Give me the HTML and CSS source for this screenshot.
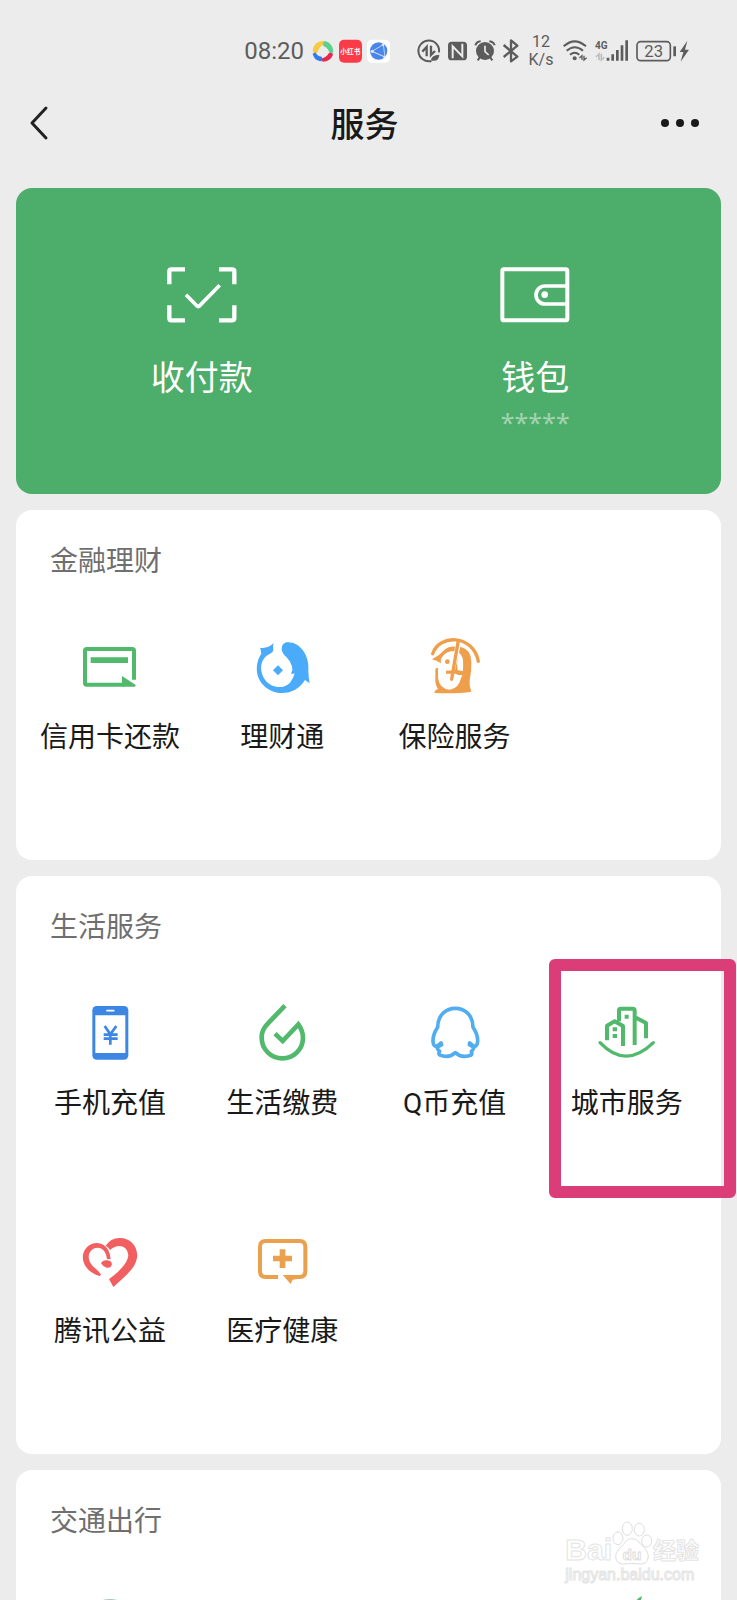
FILE: index.html
```html
<!DOCTYPE html>
<html lang="zh-CN">
<head>
<meta charset="utf-8">
<meta name="viewport" content="width=device-width, initial-scale=1">
<title>服务</title>
<link rel="stylesheet" href="styles.css">
</head>
<body>
<div class="app">
  <div class="status">
    <span class="clock">08:20</span>
    <div class="status-apps">
      <svg width="22" height="24" viewBox="245 40 66 72">
        <path d="M247 75Q250 47 279 45L285 55Q266 60 262 80Q252 88 247 75Z" fill="#f7c945"/><path d="M284 46Q309 53 309 80L298 86Q296 68 280 62Q275 49 284 46Z" fill="#5bd28c"/><path d="M308 87Q300 107 277 108L272 99Q290 95 295 83Q306 78 308 87Z" fill="#e8274f"/><path d="M270 107Q250 102 247 84L256 80Q259 92 274 93Q279 105 270 107Z" fill="#2f7bf0"/>
      </svg>
      <svg width="23" height="24" viewBox="327 40 69 72">
        <rect x="327" y="42" width="69" height="69" rx="15" fill="#fb3b47"/>
        <text x="361" y="84" class="app-mark">小红书</text>
      </svg>
      <svg width="23" height="24" viewBox="411 40 69 72">
        <rect x="411" y="42" width="69" height="69" rx="15" fill="#fff"/>
        <circle cx="446" cy="76" r="26" fill="#4a86e8"/>
        <path d="M426 77L460 57L465 94Z M426 77L465 94" fill="none" stroke="#b9d2fb" stroke-width="3"/>
        <circle cx="427" cy="77" r="5" fill="#dce9ff"/><circle cx="459" cy="57" r="4" fill="#dce9ff"/><circle cx="464" cy="94" r="4" fill="#dce9ff"/>
      </svg>
    </div>
    <div class="status-icons">
      <svg width="22" height="24" viewBox="567 40 66 72" fill="none" stroke="#5c5c5c" stroke-width="6">
        <path d="M630 80A31 31 0 1 0 606 106"/><path d="M580 78L593 64V92M606 60V88L618 76" stroke-width="7"/><path d="M606 104Q606 89 631 87Q630 110 606 104Z" fill="#5c5c5c" stroke="none"/><path d="M604 109L618 97" stroke-width="3"/>
      </svg>
      <svg width="19" height="24" viewBox="655 40 57 72">
        <rect x="655" y="48" width="57" height="56" rx="11" fill="#5c5c5c"/><path d="M669 98V62L698 92V54" fill="none" stroke="#ececec" stroke-width="6"/>
      </svg>
      <svg width="20" height="24" viewBox="45 40 60 72" fill="none" stroke="#5c5c5c">
        <circle cx="75" cy="76" r="27" fill="#5c5c5c" stroke="none"/><path d="M46 59Q50 48 62 47M88 47Q101 49 104 59M59 96L53 104M91 96L97 104" stroke-width="6"/><path d="M75 60V78L86 88" stroke="#ececec" stroke-width="5"/>
      </svg>
      <svg width="16" height="24" viewBox="130 40 48 72" fill="none" stroke="#5c5c5c" stroke-width="7" stroke-linejoin="round">
        <path d="M132 58L173 93L154 107V44L173 60L132 94"/>
      </svg>
      <span class="speed">12<br>K/s</span>
      <svg width="24" height="24" viewBox="317 40 72 72" fill="none" stroke="#5c5c5c" stroke-width="6">
        <path d="M319 62Q352 32 386 62M328 75Q352 54 377 75M338 87Q352 76 366 87"/><circle cx="352" cy="98" r="6" fill="#5c5c5c" stroke="none"/><path d="M366 97L374 90V103M380 90V103L388 96" stroke-width="4"/>
      </svg>
      <svg width="33" height="24" viewBox="406 40 99 72" fill="#5c5c5c">
        <text x="406" y="71" class="net-mark">4G</text>
        <path d="M441 96h8v9h-8zM455 86h8v19h-8zM469 73h8v32h-8zM483 59h8v46h-8zM497 44h8v61h-8z"/>
        <path d="M409 94L418 85V104M425 84V103L434 95" fill="none" stroke="#bdbdbd" stroke-width="5"/>
      </svg>
      <svg width="54" height="24" viewBox="528 40 162 72" fill="#5c5c5c">
        <rect x="531" y="48" width="100" height="57" rx="11" fill="none" stroke="#5c5c5c" stroke-width="5"/>
        <text x="581" y="95" class="battery-mark">23</text>
        <rect x="640" y="62" width="8" height="30" rx="2"/><path d="M682 45L659 79H670L662 108L687 72H675Z"/>
      </svg>
    </div>
  </div>

  <header class="header">
    <button class="icon-button" aria-label="返回">
      <svg width="20" height="36" viewBox="0 0 20 36" fill="none" stroke="#222" stroke-width="3" stroke-linejoin="round" stroke-linecap="round"><path d="M18 3L4 18L18 33"/></svg>
    </button>
    <h1 class="title">服务</h1>
    <button class="icon-button" aria-label="更多">
      <svg width="38" height="10" viewBox="0 0 38 10" fill="#191919"><circle cx="4" cy="5" r="4"/><circle cx="19" cy="5" r="4"/><circle cx="34" cy="5" r="4"/></svg>
    </button>
  </header>

  <main class="cards">
    <section class="pay">
      <a class="pay-item" href="#pay">
        <svg width="72" height="58" viewBox="108 77 216 174" fill="none" stroke="#fff" stroke-width="13">
          <path d="M165 87H124Q118 87 118 93V132M267 87H306Q313 87 313 93V132M118 195V234Q118 240 124 240H165M267 240H306Q313 240 313 234V195"/><path d="M168 163L201 197Q204 200 208 197L269 135" stroke-width="11"/>
        </svg>
        <span class="pay-label">收付款</span>
      </a>
      <a class="pay-item" href="#wallet">
        <svg width="72" height="58" viewBox="1108 77 216 174" fill="none" stroke="#fff" stroke-width="12">
          <rect x="1118" y="87" width="195" height="153" rx="5"/><path d="M1313 137H1246A27 27 0 0 0 1246 191H1313" stroke-width="11"/><circle cx="1245" cy="163" r="10" fill="#fff" stroke="none"/>
        </svg>
        <span class="pay-label">钱包</span>
        <span class="balance">*****</span>
      </a>
    </section>

    <section class="card">
      <h2 class="card-title">金融理财</h2>
      <div class="grid">
        <a class="item" href="#credit">
          <svg class="icon" viewBox="66 57 168 168"><path d="M222 179V92Q222 87 217 87H80Q75 87 75 92V189Q75 194 80 194H190" fill="none" stroke="#51b96c" stroke-width="12"/><path d="M92 112H204V129H92ZM186 168L226 194Q229 200 222 200H186Z" fill="#51b96c"/></svg>
          <span>信用卡还款</span>
        </a>
        <a class="item" href="#wealth">
          <svg class="icon" viewBox="583 57 168 168" fill="#4aabfa"><path d="M642 69Q638 78 641 91Q640 98 631 101C607 112 600 135 607 161C615 188 640 204 669 201Q696 195 705 160L696 163L695 159Q700 151 697 139Q692 122 680 111Q667 101 666 87Q666 71 680 67C717 62 751 103 746 153Q746 169 750 190L736 180C718 209 689 223 653 218C612 209 587 175 592 137Q594 116 605 101Q604 90 601 83Q624 87 642 69Z"/><path d="M655 136L670 151L655 166L640 151Z"/></svg>
          <span>理财通</span>
        </a>
        <a class="item" href="#insurance">
          <svg class="icon" viewBox="140 57 168 168" fill="#ef9e4b"><path d="M157 101C176 42 278 42 294 124" fill="none" stroke="#ef9e4b" stroke-width="10" stroke-linecap="round"/><path d="M234 62L222 130L214 178" fill="none" stroke="#ef9e4b" stroke-width="10" stroke-linecap="round"/><path d="M155 118Q177 107 195 87Q208 77 224 80L222 94Q203 91 190 106Q179 116 182 130Q169 121 155 118Z"/><path d="M240 80Q272 88 273 124Q274 154 268 180Q266 197 273 215Q230 222 162 219Q162 211 173 206Q164 195 165 177V149Q165 143 173 143V173Q177 207 209 209Q236 205 243 171L247 166Q232 166 225 161H197V152L224 151L232 114Q229 135 232 151L248 153Q249 136 248 121Q247 107 236 98Z"/><circle cx="201" cy="125" r="7"/></svg>
          <span>保险服务</span>
        </a>
      </div>
    </section>

    <section class="card">
      <h2 class="card-title">生活服务</h2>
      <div class="grid">
        <a class="item" href="#mobile">
          <svg class="icon" viewBox="66 60 168 168"><rect x="97" y="63" width="108" height="161" rx="13" fill="#3d87e4"/><path d="M106 91H196V204H106Z" fill="#fff"/><path d="M141 77H161" stroke="#fff" stroke-width="5" stroke-linecap="round"/><path d="M134 123L151 148L169 123M151 148V179M131 149H173M131 161H173" fill="none" stroke="#3d87e4" stroke-width="8"/></svg>
          <span>手机充值</span>
        </a>
        <a class="item" href="#bills">
          <svg class="icon" viewBox="583 60 168 168" fill="none" stroke="#51b96c" stroke-width="14"><path d="M676 62L625 115Q605 135 606 158A62 62 0 0 0 730 158Q730 138 716 118L669 168L646 146"/></svg>
          <span>生活缴费</span>
        </a>
        <a class="item" href="#qcoin">
          <svg class="icon" viewBox="80 60 168 168" fill="none" stroke="#51adf0" stroke-width="11" stroke-linejoin="round" stroke-linecap="round"><path d="M122 174L113 181Q99 189 98 169Q97 149 112 127C112 92 135 70 165 70C195 70 218 92 218 127Q233 149 232 169Q230 190 217 181L208 174M124 179L110 187Q113 196 118 199Q111 211 125 212Q148 219 165 203Q182 219 206 212Q218 211 213 200Q219 194 221 187L207 179"/></svg>
          <span>Q币充值</span>
        </a>
        <a class="item" href="#city">
          <svg class="icon" viewBox="597 60 168 168" fill="none" stroke="#51b96c" stroke-width="12" stroke-linejoin="round"><path d="M657 109V76Q657 71 662 71H698Q704 71 704 77V180M621 166V122L644 109L669 123V183M704 96L738 114V160"/><path d="M600 173Q677 254 760 173" stroke-width="10" stroke-linecap="round"/><path d="M674 89H686V101H674ZM638 127H651V139H638ZM638 147H651V159H638Z" fill="#51b96c" stroke="none"/></svg>
          <span>城市服务</span>
          <i class="highlight"></i>
        </a>
        <a class="item" href="#charity">
          <svg class="icon" viewBox="66 39 168 168" fill="#f15f60"><path d="M119 168C84 158 65 132 69 104C76 73 108 60 131 75Q149 85 152 118L141 117Q138 91 120 84Q98 81 88 100Q81 121 100 140Q115 151 123 164Z"/><path d="M137 77Q151 55 179 54C215 54 235 83 231 113C226 147 188 175 160 201L147 177C173 158 202 134 205 106Q203 80 179 78Q163 78 150 90Q145 81 137 77ZM123 130Q128 119 143 121Q158 124 155 136Q150 147 137 142Q129 139 123 130Z"/></svg>
          <span>腾讯公益</span>
        </a>
        <a class="item" href="#health">
          <svg class="icon" viewBox="583 39 168 168"><path d="M655 171H618Q601 171 601 154V80Q601 63 618 63H720Q737 63 737 80V154Q737 171 720 171H696" fill="none" stroke="#eaa04c" stroke-width="12"/><path d="M660 88H677V107H697V124H677V144H660V124H640V107H660ZM669 165H713V177L699 179L693 192Z" fill="#eaa04c"/></svg>
          <span>医疗健康</span>
        </a>
      </div>
    </section>

    <section class="card card-last">
      <h2 class="card-title">交通出行</h2>
      <div class="grid">
        <a class="item" href="#travel" aria-label="出行"><svg class="icon" viewBox="0 0 56 56"><circle cx="28" cy="28" r="28" fill="#a9c8bf"/></svg></a>
        <span class="item"></span>
        <span class="item"></span>
        <a class="item" href="#rail" aria-label="车票"><svg class="icon" viewBox="0 0 56 56"><path d="M16 4Q18 -1 23 -3L21 4Z" transform="translate(20)" fill="#51b96c"/></svg></a>
      </div>
    </section>
  </main>

  <div class="watermark">
    <div class="watermark-row">
      <span class="wm-latin">Bai</span>
      <svg width="41" height="44" viewBox="208 58 123 132" fill="#fff" stroke="#dedede" stroke-width="3">
        <ellipse cx="226" cy="110" rx="15" ry="19"/><ellipse cx="254" cy="81" rx="15" ry="20"/><ellipse cx="290" cy="84" rx="15" ry="19"/><ellipse cx="312" cy="118" rx="15" ry="18"/><path d="M267 111Q284 111 294 128Q317 146 317 166Q314 190 286 187Q267 183 249 187Q220 190 219 165Q220 147 242 129Q251 112 267 111Z"/>
        <text x="268" y="174" class="wm-du">du</text>
      </svg>
      <span class="wm-cjk">经验</span>
    </div>
    <span class="wm-url">jingyan.baidu.com</span>
  </div>
</div>
</body>
</html>
```
FILE: styles.css
```css
* { box-sizing: border-box; }
body {
  margin: 0;
  background: #ececec;
  color: #191919;
  font-family: Roboto, "Noto Sans CJK SC", sans-serif;
}
svg { display: block; flex: none; overflow: visible; }
a { color: inherit; text-decoration: none; }

.app {
  position: relative;
  display: flex;
  flex-direction: column;
  height: 100vh;
  overflow: hidden;
}

.status {
  flex: none;
  display: flex;
  align-items: center;
  justify-content: flex-end;
  height: 76px;
  padding: 25px 47px 0 0;
  color: #5c5c5c;
}
.clock { margin-right: 8px; font-size: 24px; line-height: 28px; }
.status-apps { display: flex; gap: 5px; margin-right: 28px; }
.status-icons { display: flex; align-items: center; gap: 8px; }
.speed { width: 28px; font-size: 16px; line-height: 18px; text-align: center; }
.app-mark { fill: #fff; font-size: 20px; font-weight: 700; text-anchor: middle; }
.net-mark { font-size: 30px; font-weight: 700; }
.battery-mark { font-size: 50px; text-anchor: middle; }

.header {
  flex: none;
  display: flex;
  align-items: center;
  justify-content: space-between;
  height: 96px;
  padding: 0 36px 2px 28px;
}
.icon-button {
  display: flex;
  align-items: center;
  width: 40px;
  height: 48px;
  padding: 0;
  border: 0;
  background: none;
}
.title { margin: 0; padding-top: 4px; font-size: 34px; font-weight: 500; line-height: 40px; }

.cards {
  flex: 1;
  display: flex;
  flex-direction: column;
  gap: 16px;
  padding: 16px 16px 0;
}
.pay {
  flex: none;
  display: grid;
  grid-template-columns: 1fr 1fr;
  min-height: 306px;
  padding: 78px 19px 40px;
  border-radius: 16px;
  background: #4dad6a;
  color: #fff;
}
.pay-item { display: flex; flex-direction: column; align-items: center; }
.pay-label { margin-top: 34px; font-size: 34px; line-height: 40px; }
.balance {
  margin-top: 8px;
  color: #a3d4b1;
  font-family: "Noto Sans", sans-serif;
  font-size: 25px;
  line-height: 32px;
}

.card {
  flex: none;
  padding: 34px 8px 12px;
  border-radius: 16px;
  background: #fff;
}
.card-last { flex: 1; border-radius: 16px 16px 0 0; }
.card-title {
  margin: 0 0 40px 26px;
  color: #6f6f6f;
  font-size: 28px;
  font-weight: 400;
  line-height: 36px;
}
.grid { display: grid; grid-template-columns: repeat(4, 1fr); grid-auto-rows: 228px; }
.item {
  position: relative;
  display: flex;
  flex-direction: column;
  align-items: center;
  gap: 25px;
  padding-top: 19px;
  font-size: 28px;
  line-height: 36px;
  white-space: nowrap;
}
.icon { width: 56px; height: 56px; }
.highlight {
  position: absolute;
  top: -27px;
  right: -23px;
  bottom: 16px;
  left: 8px;
  border: 12px solid #db3d78;
  border-radius: 6px;
}

.watermark {
  position: absolute;
  right: 38px;
  bottom: 15px;
  display: flex;
  flex-direction: column;
  color: #fff;
  font-family: "Liberation Sans", "Noto Sans CJK SC", sans-serif;
  -webkit-text-stroke: 1px #e4e4e4;
}
.watermark-row { display: flex; align-items: flex-end; }
.wm-latin { font-size: 30px; font-weight: 700; line-height: 30px; }
.wm-cjk { font-size: 23px; font-weight: 700; line-height: 28px; }
.wm-du { font-size: 46px; font-weight: 700; text-anchor: middle; -webkit-text-stroke: 0; }
.wm-url { font-size: 16px; line-height: 20px; }
```
